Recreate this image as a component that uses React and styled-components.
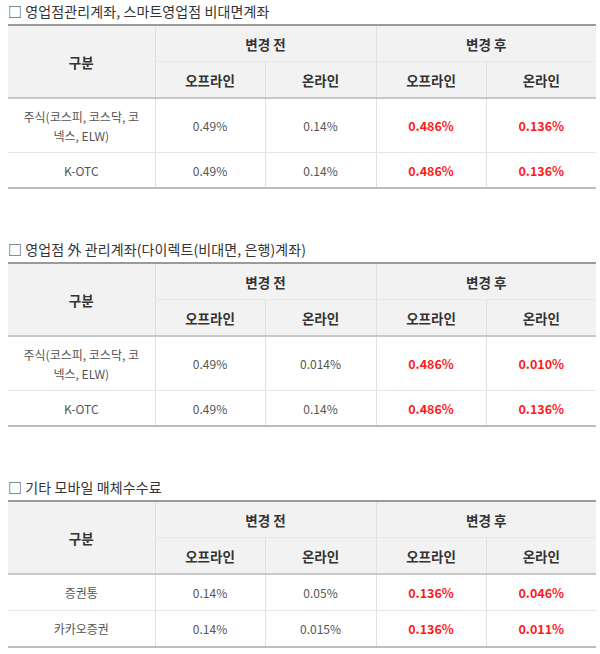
import React from "react";
import styled, { createGlobalStyle } from "styled-components";

const Global = createGlobalStyle`
  html, body { margin: 0; padding: 0; background: #fff; }
  body {
    font-family: "Noto Sans CJK KR", "Noto Sans", sans-serif;
    color: #333;
  }
`;

const Page = styled.div`
  padding: 0 4px 0 8px;
  display: flex;
  flex-direction: column;
`;

const Section = styled.section`
  display: flex;
  flex-direction: column;
  margin-bottom: ${(p) => p.$gap}px;
`;

const Title = styled.h3`
  margin: 0;
  height: 24px;
  line-height: 23px;
  font-size: 14px;
  font-weight: 400;
  color: #333;
  letter-spacing: 0.1px;
`;

const Table = styled.table`
  width: 588px;
  border-collapse: collapse;
  table-layout: fixed;
  border-top: 2px solid #9a9a9a;
  border-bottom: 2px solid #bdbdbd;
  font-size: 12px;
`;

const Th = styled.th`
  background: #f2f2f2;
  color: #333;
  font-weight: 700;
  font-size: 13.5px;
  height: ${(p) => p.$h}px;
  padding: 0;
  border-left: ${(p) => (p.$first ? "none" : "1px solid #dde0e4")};
  border-bottom: ${(p) => (p.$last ? "2px solid #c8c8c8" : "1px solid #e6e8eb")};
  text-align: center;
  vertical-align: middle;
`;

const Td = styled.td`
  height: ${(p) => p.$h}px;
  padding: 0 4px;
  text-align: center;
  vertical-align: middle;
  color: ${(p) => (p.$red ? "#ff1a1a" : "#555")};
  font-weight: ${(p) => (p.$red ? 700 : 400)};
  font-size: ${(p) => (p.$red ? "12.5px" : "12px")};
  line-height: 19px;
  border-left: ${(p) => (p.$first ? "none" : "1px solid #dde0e4")};
  border-bottom: 1px solid #e3e6ea;
`;

const sections = [
  {
    title: "□ 영업점관리계좌, 스마트영업점 비대면계좌",
    gap: 49,
    rows: [
      { name: ["주식(코스피, 코스닥, 코", "넥스, ELW)"], v: ["0.49%", "0.14%", "0.486%", "0.136%"], h: 53 },
      { name: ["K-OTC"], v: ["0.49%", "0.14%", "0.486%", "0.136%"], h: 34 },
    ],
  },
  {
    title: "□ 영업점 外 관리계좌(다이렉트(비대면, 은행)계좌)",
    gap: 49,
    rows: [
      { name: ["주식(코스피, 코스닥, 코", "넥스, ELW)"], v: ["0.49%", "0.014%", "0.486%", "0.010%"], h: 53 },
      { name: ["K-OTC"], v: ["0.49%", "0.14%", "0.486%", "0.136%"], h: 34 },
    ],
  },
  {
    title: "□ 기타 모바일 매체수수료",
    gap: 0,
    rows: [
      { name: ["증권통"], v: ["0.14%", "0.05%", "0.136%", "0.046%"], h: 35 },
      { name: ["카카오증권"], v: ["0.14%", "0.015%", "0.136%", "0.011%"], h: 35 },
    ],
  },
];

function FeeTable({ rows }) {
  return (
    <Table>
      <colgroup>
        <col style={{ width: 147 }} />
        <col style={{ width: 110 }} />
        <col style={{ width: 111 }} />
        <col style={{ width: 110 }} />
        <col style={{ width: 110 }} />
      </colgroup>
      <thead>
        <tr>
          <Th rowSpan={2} $first $last $h={35}>구분</Th>
          <Th colSpan={2} $h={35}>변경 전</Th>
          <Th colSpan={2} $h={35}>변경 후</Th>
        </tr>
        <tr>
          <Th $last $h={35}>오프라인</Th>
          <Th $last $h={35}>온라인</Th>
          <Th $last $h={35}>오프라인</Th>
          <Th $last $h={35}>온라인</Th>
        </tr>
      </thead>
      <tbody>
        {rows.map((r, i) => (
          <tr key={i}>
            <Td $first $h={r.h}>
              {r.name.map((n, j) => (
                <React.Fragment key={j}>
                  {j > 0 && <br />}
                  {n}
                </React.Fragment>
              ))}
            </Td>
            {r.v.map((v, j) => (
              <Td key={j} $h={r.h} $red={j >= 2}>
                {v}
              </Td>
            ))}
          </tr>
        ))}
      </tbody>
    </Table>
  );
}

export default function App() {
  return (
    <>
      <Global />
      <Page>
        {sections.map((s, i) => (
          <Section key={i} $gap={s.gap}>
            <Title>{s.title}</Title>
            <FeeTable rows={s.rows} />
          </Section>
        ))}
      </Page>
    </>
  );
}
